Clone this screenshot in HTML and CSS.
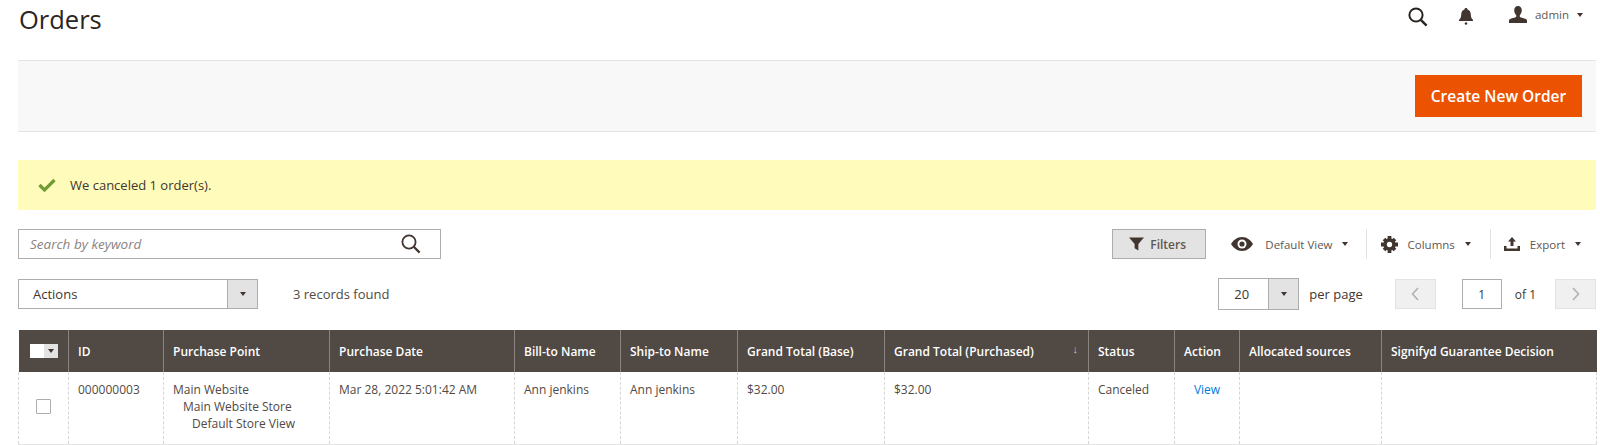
FILE: index.html
```html
<!DOCTYPE html>
<html lang="en">
<head>
    <meta charset="UTF-8">
    <title>Orders</title>
    <link rel="stylesheet" href="styles.css">
</head>
<body>
    <header class="page-header">
        <h1>Orders</h1>
        <div class="header-tools">
            <svg class="icon-search-top" viewBox="0 0 20 20"><circle cx="8" cy="8" r="6.6" fill="none" stroke="#2b2521" stroke-width="2"/><path d="M12.8 12.8 18.6 18.6" stroke="#2b2521" stroke-width="2.4" fill="none"/></svg>
            <svg class="icon-bell" viewBox="0 0 14 17"><path d="M7 0c1 0 1.500.6 1.500 1.400C10.800 2 11.600 4 11.800 6.500c.2 2.500.6 4 2.200 5.500v1H0v-1c1.600-1.500 2-3 2.200-5.500C2.400 4 3.200 2 5.500 1.400 5.500.6 6 0 7 0z" fill="#41362f"/><circle cx="7" cy="15.500" r="1.300" fill="#41362f"/></svg>
            <a class="user-menu">
                <svg class="icon-user" viewBox="0 0 18 17"><path d="M9 0c2.300 0 3.800 1.700 3.800 4.200 0 2-.9 3.800-2 4.800v2c1.800.9 7.200 1.500 7.200 3.500V17H0v-2.500c0-2 5.400-2.600 7.200-3.500V9c-1.100-1-2-2.800-2-4.800C5.200 1.700 6.700 0 9 0z" fill="#41362f"/></svg>
                <span>admin</span>
                <i class="caret"></i>
            </a>
        </div>
    </header>

    <div class="action-bar">
        <button class="btn-primary">Create New Order</button>
    </div>

    <div class="message">
        <svg class="icon-check" viewBox="0 0 18 14"><path d="M1.500 7 6.500 12 16.500 2" fill="none" stroke="#6f9d33" stroke-width="3.200"/></svg>
        <span>We canceled 1 order(s).</span>
    </div>

    <div class="toolbar">
        <div class="search-box">
            <span>Search by keyword</span>
            <svg class="icon-search" viewBox="0 0 20 20"><circle cx="8" cy="8" r="6.600" fill="none" stroke="#41362f" stroke-width="1.800"/><path d="M12.800 12.800 18.600 18.600" stroke="#41362f" stroke-width="2.200" fill="none"/></svg>
        </div>
        <div class="toolbar-right">
            <button class="btn-filters">
                <svg class="icon-funnel" viewBox="0 0 16 14"><path d="M0 0h16L10 7v7L6 11.500V7z" fill="#41362f"/></svg>
                Filters
            </button>
            <a class="tool view-tool">
                <svg class="icon-eye" viewBox="0 0 22 14"><path d="M11 0c5 0 9 3.500 11 7-2 3.500-6 7-11 7S2 10.500 0 7c2-3.500 6-7 11-7z" fill="#41362f"/><circle cx="11" cy="7" r="4.500" fill="#fff"/><circle cx="11" cy="7" r="2.600" fill="#41362f"/></svg>
                <span>Default View</span>
                <i class="caret"></i>
            </a>
            <a class="tool columns-tool">
                <svg class="icon-gear" viewBox="0 0 18 18"><g fill="#41362f"><circle cx="9" cy="9" r="6.500"/><path d="M7 0h4v4H7zM7 14h4v4H7zM0 7h4v4H0zM14 7h4v4h-4z"/><path d="M1.800 4.600 4.600 1.800l2.500 2.500-2.800 2.800zM13.400 1.800l2.800 2.800-2.500 2.500-2.800-2.800zM1.800 13.400l2.500-2.500 2.800 2.800-2.500 2.500zM16.200 13.400l-2.800 2.800-2.500-2.500 2.800-2.800z"/></g><circle cx="9" cy="9" r="2.800" fill="#fff"/></svg>
                <span>Columns</span>
                <i class="caret"></i>
            </a>
            <a class="tool export-tool">
                <svg class="icon-export" viewBox="0 0 16 14"><path d="M8 0l4 4.500H9.500V9h-3V4.500H4z" fill="#41362f"/><path d="M0 9h2.500v2.500h11V9H16v5H0z" fill="#41362f"/></svg>
                <span>Export</span>
                <i class="caret"></i>
            </a>
        </div>
    </div>

    <div class="toolbar toolbar-second">
        <div class="actions-group">
            <div class="select actions-select">
                <span class="select-value">Actions</span>
                <span class="select-btn"><i class="caret dark"></i></span>
            </div>
            <span class="records">3 records found</span>
        </div>
        <div class="pager">
            <div class="select perpage-select">
                <span class="select-value">20</span>
                <span class="select-btn"><i class="caret dark"></i></span>
            </div>
            <span class="perpage-label">per page</span>
            <button class="page-btn"><svg viewBox="0 0 10 16"><path d="M8 2 2.500 8 8 14" fill="none" stroke="#b4b0ad" stroke-width="1.600"/></svg></button>
            <span class="page-input">1</span>
            <span class="page-of">of 1</span>
            <button class="page-btn"><svg viewBox="0 0 10 16"><path d="M2 2 7.500 8 2 14" fill="none" stroke="#b4b0ad" stroke-width="1.600"/></svg></button>
        </div>
    </div>

    <table class="grid">
        <colgroup>
            <col class="c-check"><col class="c-id"><col class="c-point"><col class="c-date"><col class="c-bill"><col class="c-ship">
            <col class="c-base"><col class="c-purchased"><col class="c-status"><col class="c-action"><col class="c-sources"><col class="c-signifyd">
        </colgroup>
        <thead>
            <tr>
                <th class="th-check"><span class="mass-check"><i class="mass-box"></i><i class="mass-drop"><i class="caret dark small"></i></i></span></th>
                <th>ID</th>
                <th>Purchase Point</th>
                <th>Purchase Date</th>
                <th>Bill-to Name</th>
                <th>Ship-to Name</th>
                <th>Grand Total (Base)</th>
                <th class="sorted">Grand Total (Purchased)<span class="sort-arrow">↓</span></th>
                <th>Status</th>
                <th>Action</th>
                <th>Allocated sources</th>
                <th>Signifyd Guarantee Decision</th>
            </tr>
        </thead>
        <tbody>
            <tr>
                <td class="td-check"><i class="row-check"></i></td>
                <td>000000003</td>
                <td>Main Website<div class="indent-1">Main Website Store</div><div class="indent-2">Default Store View</div></td>
                <td>Mar 28, 2022 5:01:42 AM</td>
                <td>Ann jenkins</td>
                <td>Ann jenkins</td>
                <td>$32.00</td>
                <td>$32.00</td>
                <td>Canceled</td>
                <td class="td-action"><a>View</a></td>
                <td></td>
                <td></td>
            </tr>
        </tbody>
    </table>
</body>
</html>
```
FILE: styles.css
```css
* { box-sizing: border-box; }
html, body { height: 445px; overflow: hidden; }
body {
    margin: 0;
    padding: 0 4px 0 18px;
    font-family: "Open Sans", sans-serif;
    font-size: 12px;
    color: #41362f;
    background: #fff;
}
i { display: block; }
svg { display: block; flex: none; }
button { font-family: inherit; cursor: pointer; }

.caret { width: 0; height: 0; border: 3.5px solid transparent; border-top: 4px solid #41362f; border-bottom: 0; }
.caret.small { border-width: 3px; border-top-width: 4px; border-bottom-width: 0; }

/* header */
.page-header { display: flex; justify-content: space-between; height: 60px; }
.page-header h1 { margin: 2px 0 0 1px; font-size: 25.500px; line-height: 34px; font-weight: 400; color: #2b2521; }
.header-tools { display: flex; align-items: flex-start; padding-top: 6px; padding-right: 13px; }
.icon-search-top { width: 20px; height: 20px; margin-top: 1px; }
.icon-bell { width: 14px; height: 17px; margin: 2px 0 0 31px; }
.user-menu { display: flex; align-items: center; margin-left: 36px; color: #5f5750; }
.user-menu span { margin-left: 8px; font-size: 11.500px; }
.user-menu .caret { margin-left: 8px; }
.icon-user { width: 18px; height: 17px; }

/* action bar */
.action-bar {
    display: flex;
    justify-content: flex-end;
    height: 72px;
    padding: 14px 14px 0 0;
    background: #f8f8f8;
    border-top: 1px solid #e3e3e3;
    border-bottom: 1px solid #e3e3e3;
}
.btn-primary {
    width: 167px;
    height: 42px;
    border: 0;
    background: #eb5202;
    color: #fff;
    font-size: 15.500px;
    font-weight: 600;
}

/* message */
.message {
    display: flex;
    align-items: center;
    height: 50px;
    margin-top: 28px;
    padding-left: 20px;
    background: #fffbbb;
    color: #41362f;
    font-size: 13px;
}
.icon-check { width: 18px; height: 14px; margin-right: 14px; }

/* toolbars */
.toolbar { display: flex; justify-content: space-between; margin-top: 19px; height: 30px; }
.toolbar-second { margin-top: 20px; font-size: 13px; }
.search-box {
    display: flex;
    align-items: center;
    justify-content: space-between;
    width: 423px;
    padding: 0 19px 0 11px;
    border: 1px solid #adadad;
    font-size: 13.500px;
    font-style: italic;
    color: #8a837f;
}
.icon-search { width: 20px; height: 20px; }
.toolbar-right { display: flex; align-items: stretch; padding-right: 15px; }
.btn-filters {
    display: flex;
    align-items: center;
    gap: 6px;
    width: 94px;
    padding: 0 0 0 16px;
    border: 1px solid #adadad;
    background: #e3e3e3;
    color: #5f5750;
    font-size: 12px;
    font-weight: 600;
}
.icon-funnel { width: 15px; height: 14px; }
.tool { display: flex; align-items: center; color: #5f5750; font-size: 11.500px; }
.tool .caret { margin-left: 10px; }
.view-tool { margin-left: 25px; padding-right: 18px; border-right: 1px solid #e3e3e3; }
.view-tool .caret { margin-left: 9px; }
.columns-tool { padding: 0 19px 0 14px; border-right: 1px solid #e3e3e3; }
.export-tool { padding-left: 13px; }
.icon-eye { width: 22px; height: 14px; margin-right: 12px; }
.icon-gear { width: 17px; height: 17px; margin-right: 10px; }
.icon-export { width: 16px; height: 14px; margin-right: 10px; }

.actions-group { display: flex; align-items: center; }
.select { display: flex; border: 1px solid #adadad; background: #fff; height: 100%; }
.select-value { flex: 1; display: flex; align-items: center; }
.select-btn { display: flex; align-items: center; justify-content: center; width: 30px; background: #e3e3e3; border-left: 1px solid #adadad; }
.actions-select { width: 240px; }
.actions-select .select-value { padding-left: 14px; }
.records { margin-left: 35px; color: #514943; }
.pager { display: flex; align-items: center; }
.perpage-select { width: 81px; height: 32px; }
.perpage-select .select-value { padding-left: 15px; }
.perpage-label { margin: 0 32px 0 10px; }
.page-btn { display: flex; align-items: center; justify-content: center; width: 41px; height: 30px; padding: 0; border: 1px solid #e3e3e3; background: #f0f0f0; }
.page-btn svg { width: 10px; height: 16px; }
.page-input { display: flex; align-items: center; justify-content: center; width: 40px; height: 30px; margin-left: 26px; border: 1px solid #adadad; font-size: 12px; }
.page-of { margin: 0 19px 0 13px; font-size: 12px; }

/* grid */
.grid { width: 1578px; margin-top: 21px; border-collapse: collapse; table-layout: fixed; font-size: 12px; }
.c-check { width: 50px; }
.c-id { width: 95px; }
.c-point { width: 166px; }
.c-date { width: 185px; }
.c-bill { width: 106px; }
.c-ship { width: 117px; }
.c-base { width: 147px; }
.c-purchased { width: 204px; }
.c-status { width: 86px; }
.c-action { width: 65px; }
.c-sources { width: 142px; }
.c-signifyd { width: 215px; }
.grid th {
    height: 42px;
    padding: 0 9px;
    background: #514943;
    color: #fff;
    font-weight: 600;
    text-align: left;
    white-space: nowrap;
    border-left: 1px solid #8a837f;
}
.grid th:first-child { border-left: 0; }
.grid th.th-check { padding: 0 0 0 11px; }
.sorted { position: relative; }
.sort-arrow { position: absolute; right: 10px; top: 11px; font-size: 11px; font-weight: 400; color: #c4c0bd; }
.mass-check { display: flex; width: 28px; height: 14px; }
.mass-box { width: 14px; background: #fff; }
.mass-drop { display: flex; align-items: center; justify-content: center; width: 14px; background: #e3e3e3; }
.grid td {
    height: 72px;
    padding: 9px 9px 0;
    vertical-align: top;
    line-height: 17px;
    color: #514943;
    border-left: 1px dashed #d6d6d6;
    border-bottom: 1px solid #e3e3e3;
}
.grid td:last-child { border-right: 1px dashed #d6d6d6; }
.grid td.td-check { padding: 27px 0 0 17px; }
.row-check { width: 15px; height: 15px; border: 1px solid #adadad; border-radius: 1px; }
.indent-1 { padding-left: 10px; }
.indent-2 { padding-left: 19px; }
.td-action { text-align: center; }
.td-action a { color: #007bdb; }
```
